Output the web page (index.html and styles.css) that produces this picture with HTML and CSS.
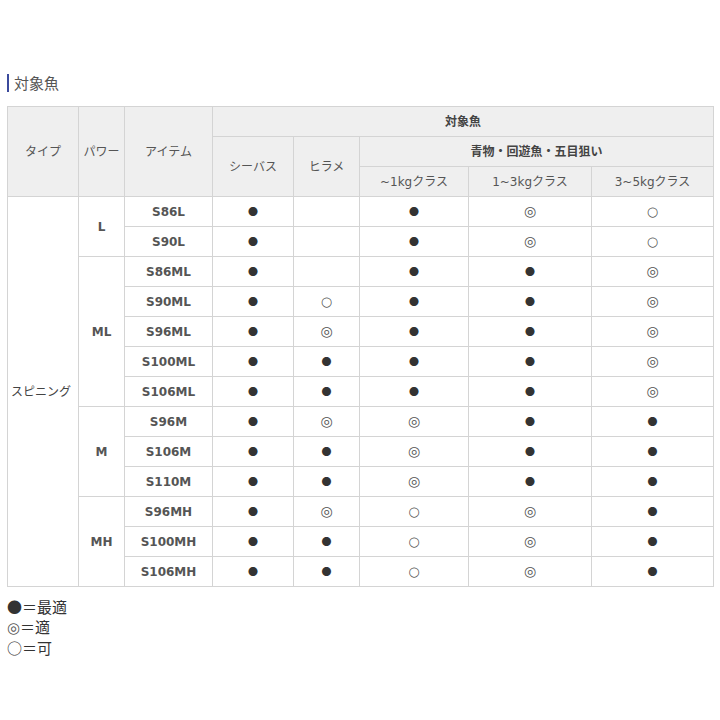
FILE: index.html
```html
<!DOCTYPE html>
<html lang="ja">
<head>
<meta charset="utf-8">
<link rel="stylesheet" href="styles.css">
</head>
<body>
<div class="page">
  <h3 class="title">対象魚</h3>
  <table class="spec">
    <colgroup>
      <col class="c1"><col class="c2"><col class="c3"><col class="c4"><col class="c5"><col class="c6"><col class="c7"><col class="c8">
    </colgroup>
    <thead>
      <tr><th rowspan="3" class="n">タイプ</th><th rowspan="3" class="n">パワー</th><th rowspan="3" class="n">アイテム</th><th colspan="5">対象魚</th></tr>
      <tr><th rowspan="2" class="n">シーバス</th><th rowspan="2" class="n">ヒラメ</th><th colspan="3">青物・回遊魚・五目狙い</th></tr>
      <tr><th class="n">~1kgクラス</th><th class="n">1~3kgクラス</th><th class="n">3~5kgクラス</th></tr>
    </thead>
    <tbody>
      <tr><td rowspan="13" class="type">スピニング</td><td rowspan="2" class="b">L</td><td class="b">S86L</td><td><span class="s">●</span></td><td></td><td><span class="s">●</span></td><td><span class="s d">◎</span></td><td><span class="s o">○</span></td></tr>
      <tr><td class="b">S90L</td><td><span class="s">●</span></td><td></td><td><span class="s">●</span></td><td><span class="s d">◎</span></td><td><span class="s o">○</span></td></tr>
      <tr><td rowspan="5" class="b">ML</td><td class="b">S86ML</td><td><span class="s">●</span></td><td></td><td><span class="s">●</span></td><td><span class="s">●</span></td><td><span class="s d">◎</span></td></tr>
      <tr><td class="b">S90ML</td><td><span class="s">●</span></td><td><span class="s o">○</span></td><td><span class="s">●</span></td><td><span class="s">●</span></td><td><span class="s d">◎</span></td></tr>
      <tr><td class="b">S96ML</td><td><span class="s">●</span></td><td><span class="s d">◎</span></td><td><span class="s">●</span></td><td><span class="s">●</span></td><td><span class="s d">◎</span></td></tr>
      <tr><td class="b">S100ML</td><td><span class="s">●</span></td><td><span class="s">●</span></td><td><span class="s">●</span></td><td><span class="s">●</span></td><td><span class="s d">◎</span></td></tr>
      <tr><td class="b">S106ML</td><td><span class="s">●</span></td><td><span class="s">●</span></td><td><span class="s">●</span></td><td><span class="s">●</span></td><td><span class="s d">◎</span></td></tr>
      <tr><td rowspan="3" class="b">M</td><td class="b">S96M</td><td><span class="s">●</span></td><td><span class="s d">◎</span></td><td><span class="s d">◎</span></td><td><span class="s">●</span></td><td><span class="s">●</span></td></tr>
      <tr><td class="b">S106M</td><td><span class="s">●</span></td><td><span class="s">●</span></td><td><span class="s d">◎</span></td><td><span class="s">●</span></td><td><span class="s">●</span></td></tr>
      <tr><td class="b">S110M</td><td><span class="s">●</span></td><td><span class="s">●</span></td><td><span class="s d">◎</span></td><td><span class="s">●</span></td><td><span class="s">●</span></td></tr>
      <tr><td rowspan="3" class="b">MH</td><td class="b">S96MH</td><td><span class="s">●</span></td><td><span class="s d">◎</span></td><td><span class="s o">○</span></td><td><span class="s d">◎</span></td><td><span class="s">●</span></td></tr>
      <tr><td class="b">S100MH</td><td><span class="s">●</span></td><td><span class="s">●</span></td><td><span class="s o">○</span></td><td><span class="s d">◎</span></td><td><span class="s">●</span></td></tr>
      <tr><td class="b">S106MH</td><td><span class="s">●</span></td><td><span class="s">●</span></td><td><span class="s o">○</span></td><td><span class="s d">◎</span></td><td><span class="s">●</span></td></tr>
    </tbody>
  </table>
  <div class="legend">
    <p><span class="lg">●</span>＝最適</p>
    <p><span class="lg ld">◎</span>＝適</p>
    <p><span class="lg">○</span>＝可</p>
  </div>
</div>
</body>
</html>
```

FILE: styles.css
```css
html, body {
  margin: 0;
  padding: 0;
  background: #fff;
}
body {
  font-family: "DejaVu Sans", "Noto Sans CJK JP", sans-serif;
  color: #444;
}
.page {
  padding: 74px 0 0 7px;
}
.title {
  margin: 0 0 14px 0;
  font-family: "Noto Sans CJK JP", sans-serif;
  font-weight: normal;
  font-size: 15px;
  line-height: 18px;
  color: #555;
  border-left: 2px solid #3b4a9c;
  padding-left: 5px;
  height: 18px;
}
.spec {
  border-collapse: collapse;
  table-layout: fixed;
  width: 706px;
  font-size: 12px;
}
.c1 { width: 71px; }
.c2 { width: 46px; }
.c3 { width: 88px; }
.c4 { width: 81px; }
.c5 { width: 66px; }
.c6 { width: 109px; }
.c7 { width: 123px; }
.c8 { width: 122px; }
.spec th, .spec td {
  border: 1px solid #d4d4d4;
  text-align: center;
  vertical-align: middle;
  padding: 0;
  height: 29px;
  line-height: 14px;
}
.spec th {
  background: #efefef;
  font-weight: bold;
  color: #444;
}
.spec th.n {
  font-weight: normal;
  color: #555;
}
.spec td.b {
  font-weight: bold;
  color: #555;
}
.spec td.type {
  text-align: left;
  padding-left: 3px;
  color: #444;
}
.s {
  font-family: "Noto Sans CJK JP", sans-serif;
  font-size: 10px;
  color: #333;
}
.s.d {
  font-family: "DejaVu Sans", sans-serif;
  font-size: 14px;
  color: #555;
}
.s.o {
  font-family: "DejaVu Sans", sans-serif;
  font-size: 13px;
  color: #555;
}
.legend {
  margin-top: 10px;
  font-family: "Noto Sans CJK JP", sans-serif;
  font-size: 15px;
  line-height: 20px;
  color: #333;
}
.legend p {
  margin: 0;
}
.lg {
  color: #333;
}
.lg.ld {
  font-family: "DejaVu Sans", sans-serif;
  color: #555;
  font-size: 15px;
}
```
